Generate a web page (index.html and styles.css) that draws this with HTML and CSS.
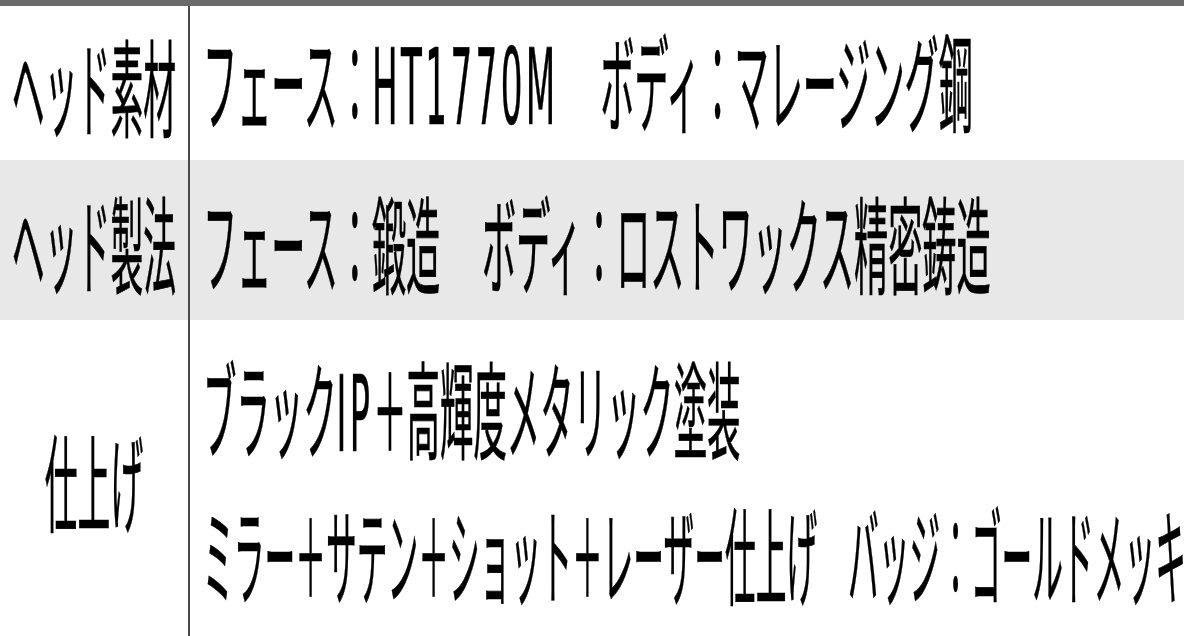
FILE: index.html
```html
<!DOCTYPE html>
<html lang="ja">
<head>
<meta charset="utf-8">
<title>スペック</title>
<link rel="stylesheet" href="styles.css">
</head>
<body>
<div class="spec">
  <div class="row">
    <div class="label"><span class="sq sq-c">ヘッド素材</span></div>
    <div class="value"><span class="sq sq-wide">フェース：<span class="lat">HT1770M</span>　 ボディ：マレージング鋼</span></div>
  </div>
  <div class="row row-alt">
    <div class="label"><span class="sq sq-c">ヘッド製法</span></div>
    <div class="value"><span class="sq sq-wide">フェース：鍛造　 ボディ：ロストワックス精密鋳造</span></div>
  </div>
  <div class="row row-tall">
    <div class="label"><span class="sq sq-c">仕上げ</span></div>
    <div class="value">
      <span class="sq line">ブラック<span class="lat">IP</span>＋高輝度メタリック塗装</span>
      <span class="sq line sq-narrow">ミラー＋サテン＋ショット＋レーザー仕上げ　バッジ：ゴールドメッキ</span>
    </div>
  </div>
</div>
</body>
</html>
```
FILE: styles.css
```css
html, body {
  margin: 0;
  padding: 0;
  background: #fff;
  overflow: hidden;
}

body {
  width: 1200px;
  height: 636px;
  font-family: "Noto Sans CJK JP", "Noto Sans", sans-serif;
  color: #000;
}

.spec {
  width: 1184px;
  border-top: 6px solid #6a6a6a;
}

.row {
  display: grid;
  grid-template-columns: 190px 1fr;
  height: 154px;
}

.row-alt {
  background: #e8e8e8;
  height: 160px;
}

.row-tall {
  height: 316px;
}

.label {
  border-right: 2px solid #4a4a4a;
  display: flex;
  justify-content: center;
  align-items: center;
  min-width: 0;
}

.value {
  display: flex;
  flex-direction: column;
  justify-content: center;
  align-items: flex-start;
  padding-left: 13px;
  min-width: 0;
}

.sq {
  display: inline-block;
  flex: none;
  white-space: nowrap;
  font-size: 106px;
  font-weight: 400;
  line-height: 1;
  -webkit-text-stroke: 0.7px #000;
  transform: scaleX(0.315);
  transform-origin: left center;
}

.sq-c {
  transform: scaleX(0.31);
  transform-origin: center center;
}

.sq-wide {
  transform: scaleX(0.322);
}

.lat {
  font-family: "DejaVu Sans", sans-serif;
  letter-spacing: 0.1em;
}

.line {
  line-height: 136px;
}

.sq-narrow {
  transform: scaleX(0.29);
}
```
